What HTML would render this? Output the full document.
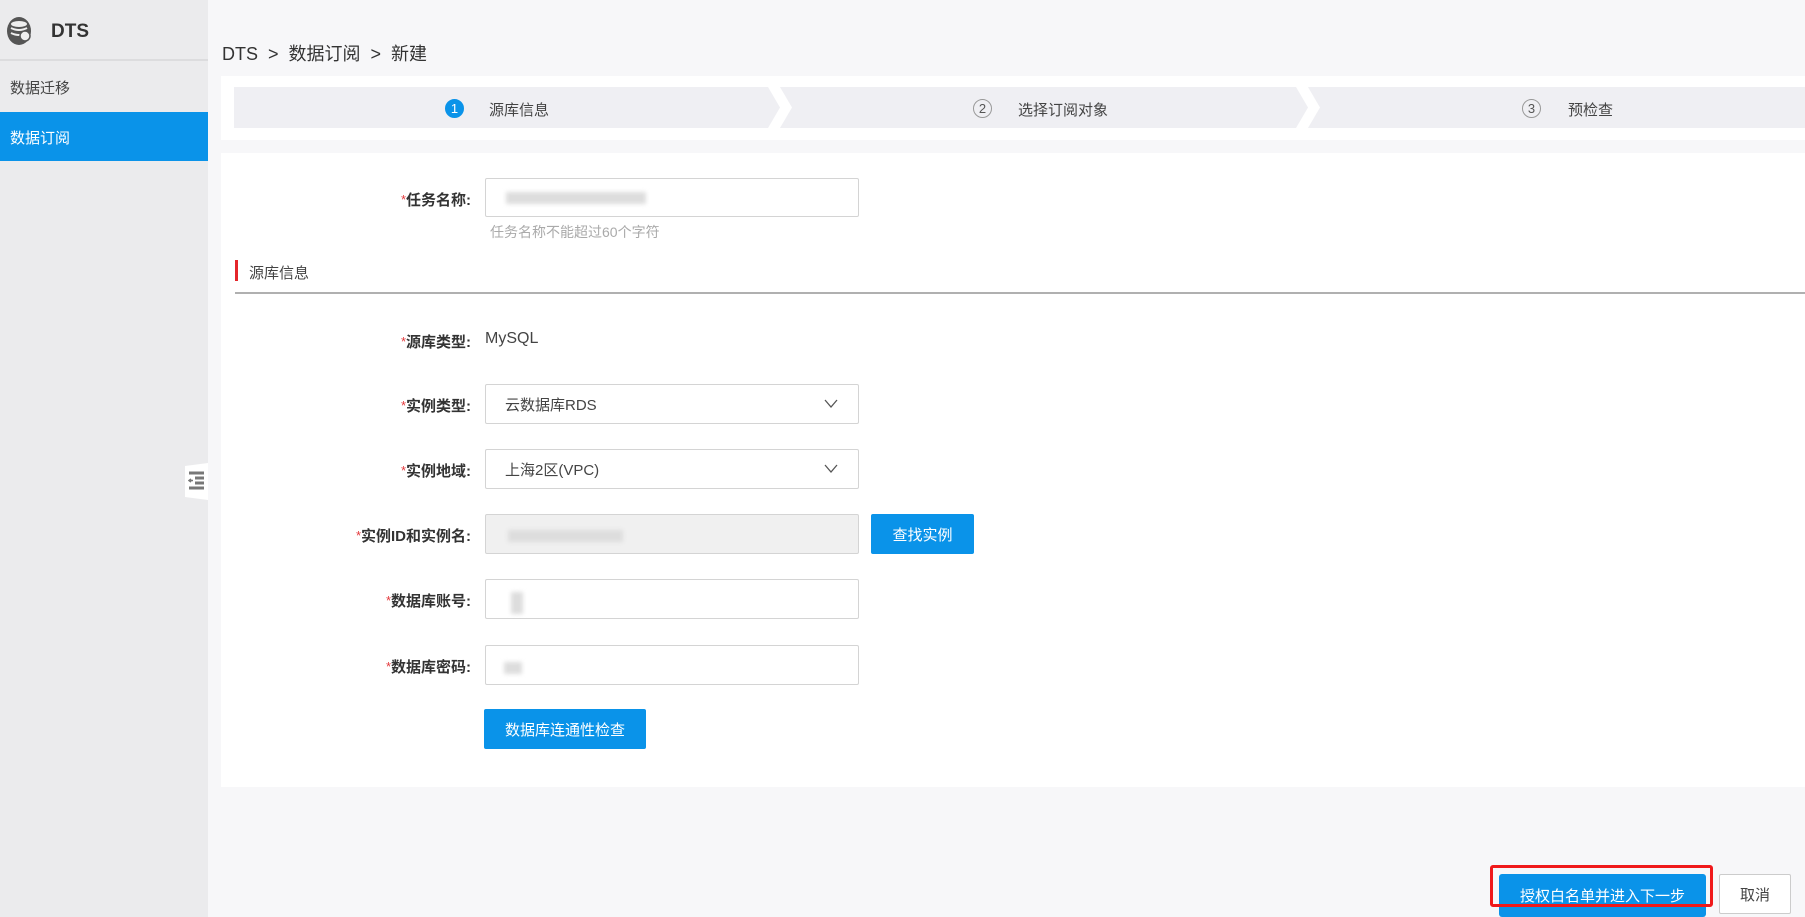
<!DOCTYPE html>
<html><head><meta charset="utf-8"><style>
*{margin:0;padding:0;box-sizing:border-box}
body{width:1805px;height:917px;overflow:hidden;background:#f7f7f9;font-family:"Liberation Sans","Noto Sans CJK SC",sans-serif;position:relative;color:#333}
.abs{position:absolute}
.side{left:0;top:0;width:208px;height:917px;background:#ebebed}
.lbl{position:absolute;width:300px;text-align:right;font-size:15px;font-weight:bold;color:#333}
.lbl i{color:#e4393c;font-style:normal;font-weight:normal;font-size:13px;position:relative;top:-1px}
.inp{position:absolute;left:485px;width:374px;background:#fff;border:1px solid #d4d4d4;border-radius:2px;font-size:15px;padding-left:19px;display:flex;align-items:center;color:#444}
.btn{position:absolute;background:#0a93e9;color:#fff;font-size:15px;display:flex;align-items:center;justify-content:center;border-radius:2px}
.circ{position:absolute;width:19px;height:19px;border-radius:50%;border:1px solid #999;font-size:13px;display:flex;align-items:center;justify-content:center;color:#555}
.st{position:absolute;font-size:15px;color:#444}
.chev{position:absolute;top:87px;height:41px;width:24px}
.blur{position:absolute;background:#ddd;filter:blur(2px)}
</style></head><body>
<div class="abs side">
 <div class="abs" style="left:0;top:0;width:208px;height:61px;border-bottom:2px solid #dcdcde"></div>
 <svg class="abs" style="left:6px;top:16px" width="28" height="30" viewBox="0 0 28 30"><ellipse cx="13" cy="15" rx="12" ry="14" fill="#555"/><ellipse cx="13" cy="8" rx="8" ry="3" fill="#eee"/><path d="M5 12q8 4 16 0M5 17q8 4 16 0" stroke="#eee" stroke-width="2" fill="none"/><circle cx="19" cy="20" r="5" fill="#eee" stroke="#555" stroke-width="1.5"/></svg>
 <div class="abs" style="left:51px;top:21px;font-size:19px;font-weight:bold;color:#333">DTS</div>
 <div class="abs" style="left:10px;top:77px;font-size:15px;color:#444">数据迁移</div>
 <div class="abs" style="left:0;top:112px;width:208px;height:49px;background:#0a93e9;color:#fff;font-size:15px;padding:15px 0 0 10px">数据订阅</div>
</div>
<div class="abs" style="left:185px;top:463px;width:23px;height:37px;background:#fff;clip-path:polygon(0 3px,100% 0,100% 100%,0 34px)"></div>
<svg class="abs" style="left:188px;top:471px" width="17" height="20"><path d="M1 2h15M7 7h9M7 12h9M1 17h15" stroke="#777" stroke-width="3"/><path d="M5 9.5L2 9.5M3 8l-2 1.5 2 1.5" stroke="#777" stroke-width="1.5" fill="none"/></svg>
<div class="abs" style="left:222px;top:40px;font-size:18px;color:#333">DTS &nbsp;&gt;&nbsp; 数据订阅 &nbsp;&gt;&nbsp; 新建</div>
<div class="abs" style="left:221px;top:76px;width:1584px;height:64px;background:#fff"></div>
<div class="abs" style="left:234px;top:87px;width:1571px;height:41px;background:#efeff3"></div>
<svg class="chev" style="left:768px" viewBox="0 0 24 41"><path d="M0 0h12l12 20.5L12 41H0l12-20.5z" fill="#fff"/></svg>
<svg class="chev" style="left:1296px" viewBox="0 0 24 41"><path d="M0 0h12l12 20.5L12 41H0l12-20.5z" fill="#fff"/></svg>
<div class="circ" style="left:445px;top:99px;background:#0a93e9;border-color:#0a93e9;color:#fff">1</div>
<div class="st" style="left:489px;top:99px">源库信息</div>
<div class="circ" style="left:973px;top:99px">2</div>
<div class="st" style="left:1018px;top:99px">选择订阅对象</div>
<div class="circ" style="left:1522px;top:99px">3</div>
<div class="st" style="left:1568px;top:99px">预检查</div>
<div class="abs" style="left:221px;top:153px;width:1584px;height:634px;background:#fff"></div>
<div class="lbl" style="left:171px;top:189px"><i>*</i>任务名称:</div>
<div class="inp" style="top:178px;height:39px"><span class="blur" style="left:20px;top:13px;width:140px;height:12px"></span></div>
<div class="abs" style="left:490px;top:222px;font-size:14px;color:#aaa">任务名称不能超过60个字符</div>
<div class="abs" style="left:235px;top:260px;width:3px;height:21px;background:#e4262b"></div>
<div class="abs" style="left:249px;top:262px;font-size:15px;color:#444">源库信息</div>
<div class="abs" style="left:235px;top:292px;width:1570px;height:2px;background:#b0b0b0"></div>
<div class="lbl" style="left:171px;top:331px"><i>*</i>源库类型:</div>
<div class="abs" style="left:485px;top:330px;font-size:16px;color:#444">MySQL</div>
<div class="lbl" style="left:171px;top:395px"><i>*</i>实例类型:</div>
<div class="inp" style="top:384px;height:40px">云数据库RDS<svg class="abs" style="right:20px;top:14px" width="14" height="9"><path d="M1 1l6 7 6-7" stroke="#555" stroke-width="1.3" fill="none"/></svg></div>
<div class="lbl" style="left:171px;top:460px"><i>*</i>实例地域:</div>
<div class="inp" style="top:449px;height:40px">上海2区(VPC)<svg class="abs" style="right:20px;top:14px" width="14" height="9"><path d="M1 1l6 7 6-7" stroke="#555" stroke-width="1.3" fill="none"/></svg></div>
<div class="lbl" style="left:171px;top:525px"><i>*</i>实例ID和实例名:</div>
<div class="inp" style="top:514px;height:40px;background:#f0f0f0"><span class="blur" style="left:22px;top:15px;width:115px;height:12px"></span></div>
<div class="btn" style="left:871px;top:514px;width:103px;height:40px">查找实例</div>
<div class="lbl" style="left:171px;top:590px"><i>*</i>数据库账号:</div>
<div class="inp" style="top:579px;height:40px"><span class="blur" style="left:25px;top:12px;width:12px;height:22px"></span></div>
<div class="lbl" style="left:171px;top:656px"><i>*</i>数据库密码:</div>
<div class="inp" style="top:645px;height:40px"><span class="blur" style="left:18px;top:16px;width:18px;height:12px"></span></div>
<div class="btn" style="left:484px;top:709px;width:162px;height:40px">数据库连通性检查</div>
<div class="btn" style="left:1499px;top:874px;width:207px;height:43px;border-radius:3px">授权白名单并进入下一步</div>
<div class="abs" style="left:1490px;top:865px;width:223px;height:42px;border:3px solid #f0191b;border-radius:3px"></div>
<div class="abs" style="left:1719px;top:874px;width:72px;height:40px;border:1px solid #ccc;border-radius:2px;background:#fff;font-size:15px;display:flex;align-items:center;justify-content:center;color:#444">取消</div>
</body></html>
